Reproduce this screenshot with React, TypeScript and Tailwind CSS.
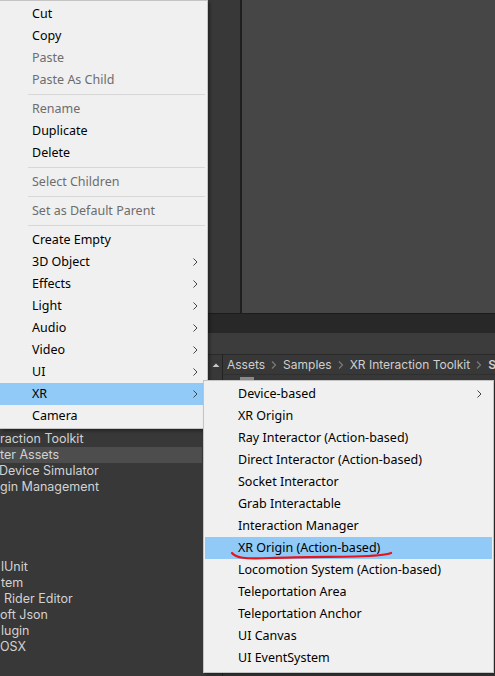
import React from 'react';

type Item = { label?: string; disabled?: boolean; sub?: boolean; active?: boolean; sep?: boolean };

const mainItems: Item[] = [
  { label: 'Cut' },
  { label: 'Copy' },
  { label: 'Paste', disabled: true },
  { label: 'Paste As Child', disabled: true },
  { sep: true },
  { label: 'Rename', disabled: true },
  { label: 'Duplicate' },
  { label: 'Delete' },
  { sep: true },
  { label: 'Select Children', disabled: true },
  { sep: true },
  { label: 'Set as Default Parent', disabled: true },
  { sep: true },
  { label: 'Create Empty' },
  { label: '3D Object', sub: true },
  { label: 'Effects', sub: true },
  { label: 'Light', sub: true },
  { label: 'Audio', sub: true },
  { label: 'Video', sub: true },
  { label: 'UI', sub: true },
  { label: 'XR', sub: true, active: true },
  { label: 'Camera' },
];

const xrItems: Item[] = [
  { label: 'Device-based', sub: true },
  { label: 'XR Origin' },
  { label: 'Ray Interactor (Action-based)' },
  { label: 'Direct Interactor (Action-based)' },
  { label: 'Socket Interactor' },
  { label: 'Grab Interactable' },
  { label: 'Interaction Manager' },
  { label: 'XR Origin (Action-based)', active: true },
  { label: 'Locomotion System (Action-based)' },
  { label: 'Teleportation Area' },
  { label: 'Teleportation Anchor' },
  { label: 'UI Canvas' },
  { label: 'UI EventSystem' },
];

// tree rows in the project panel (left side is scrolled off)
const treeRows = [
  { text: 'raction Toolkit', indent: 'ml-0' },
  { text: 'ter Assets', indent: 'ml-0', selected: true },
  { text: 'Device Simulator', indent: '-ml-px' },
  { text: 'gin Management', indent: 'ml-0' },
  { text: '' },
  { text: '' },
  { text: '' },
  { text: '' },
  { text: 'lUnit', indent: 'ml-px' },
  { text: 'tem', indent: 'ml-px' },
  { text: 'Rider Editor', indent: 'ml-[4px]' },
  { text: 'oft Json', indent: 'ml-0' },
  { text: 'lugin', indent: 'ml-px' },
  { text: 'OSX', indent: 'ml-0' },
];

function Chevron({ className }: { className?: string }) {
  return (
    <svg width="6" height="10" viewBox="0 0 6 10" className={className}>
      <path d="M1.5 1.5 L5 5 L1.5 8.5" fill="none" stroke="#444" strokeWidth="1" />
    </svg>
  );
}

function MenuRow({ item, textLeft, chevronRight }: { item: Item; textLeft: string; chevronRight: string }) {
  if (item.sep) {
    return (
      <div className="h-[7px] flex items-center pl-[28px] pr-[2px]">
        <div className="h-px w-full bg-[#d7d7d7]" />
      </div>
    );
  }
  return (
    <div className={`relative h-[22px] flex items-center ${item.active ? 'bg-[#91c9f7]' : ''}`}>
      <span
        className={`${textLeft} text-[12.5px] leading-none ${item.disabled ? 'text-[#6d6d6d]' : 'text-black'}`}
      >
        {item.label}
      </span>
      {item.sub && <Chevron className={`absolute top-[6px] ${chevronRight}`} />}
    </div>
  );
}

function Crumb() {
  return (
    <svg width="6" height="10" viewBox="0 0 6 10" className="shrink-0">
      <path d="M1 1.5 L4.5 5 L1 8.5" fill="none" stroke="#7a7a7a" strokeWidth="1.2" />
    </svg>
  );
}

export default function App() {
  return (
    <div
      className="relative w-[495px] h-[676px] overflow-hidden bg-[#383838]"
      style={{ fontFamily: '"Noto Sans", "Liberation Sans", sans-serif' }}
    >
      {/* editor background */}
      <div className="flex flex-col h-full">
        <div className="flex h-[313px] shrink-0">
          <div className="w-[240px] shrink-0 bg-[#383838]" />
          <div className="w-[2px] shrink-0 bg-[#1e1e1e]" />
          <div className="flex-1 bg-[#464646]" />
        </div>
        <div className="h-[20px] shrink-0 bg-[#282828] border-t border-[#1c1c1c]" />
        <div className="h-[21px] shrink-0 bg-[#3c3c3c]" />
        <div className="flex flex-1 min-h-0">
          {/* project tree */}
          <div className="w-[222px] shrink-0 flex flex-col bg-[#383838]">
            <div className="h-[21px] flex items-center justify-end pr-[2px] border-t border-[#2a2a2a]">
              <svg width="8" height="6" viewBox="0 0 8 6">
                <path d="M0.5 5 L4 1.5 L7.5 5 Z" fill="#c8c8c8" />
              </svg>
            </div>
            <div
              className="flex flex-col mt-[56px] w-[202px] overflow-hidden"
              style={{ fontFamily: 'Inter, "Noto Sans", sans-serif' }}
            >
              {treeRows.map((r, i) => (
                <div key={i} className={`h-[16px] flex items-center whitespace-nowrap ${r.selected ? 'bg-[#4d4d4d]' : ''}`}>
                  <span className={`${r.indent ?? ''} text-[12.5px] leading-none text-[#d2d2d2]`}>{r.text}</span>
                </div>
              ))}
            </div>
          </div>
          <div className="w-px shrink-0 bg-[#232323]" />
          {/* breadcrumb + assets */}
          <div className="flex-1 min-w-0 flex flex-col">
            <div
              className="h-[21px] flex items-center gap-[6px] pl-[4px] whitespace-nowrap overflow-hidden border-t border-[#2a2a2a] border-b border-b-[#2f2f2f] text-[12px] text-[#cfcfcf]"
              style={{ fontFamily: 'Inter, "Noto Sans", sans-serif' }}
            >
              <span>Assets</span>
              <Crumb />
              <span>Samples</span>
              <Crumb />
              <span>XR Interaction Toolkit</span>
              <Crumb />
              <span className="font-semibold">S</span>
            </div>
            <div className="pl-[17px] pt-[2px]">
              <div className="w-[14px] h-[3px] bg-[#8a8a8a]" />
            </div>
          </div>
        </div>
      </div>

      {/* main context menu */}
      <div className="absolute left-0 top-0 w-[208px] h-[429px] bg-[#f0f0f0] border-t border-r border-b border-[#c4c4c4] pt-[2px] shadow-[2px_2px_3px_rgba(0,0,0,0.35)]">
        {mainItems.map((it, i) => (
          <MenuRow key={i} item={it} textLeft="ml-[32px]" chevronRight="right-[9px]" />
        ))}
      </div>

      {/* XR submenu */}
      <div className="absolute left-[203px] top-[380px] w-[291px] h-[293px] bg-[#f0f0f0] border border-[#c4c4c4] pt-[2px] px-px shadow-[2px_2px_3px_rgba(0,0,0,0.35)]">
        {xrItems.map((it, i) => (
          <MenuRow key={i} item={it} textLeft="ml-[33px]" chevronRight="right-[10px]" />
        ))}
        {/* red hand-drawn underline */}
        <svg className="absolute left-[26px] top-[169px]" width="164" height="12" viewBox="0 0 164 12">
          <path
            d="M2 3 C 6 8, 14 9, 40 8 C 70 7, 95 7, 125 6.5 C 145 6, 156 5, 161 3"
            fill="none"
            stroke="#e8141c"
            strokeWidth="2.2"
            strokeLinecap="round"
          />
        </svg>
      </div>
    </div>
  );
}
